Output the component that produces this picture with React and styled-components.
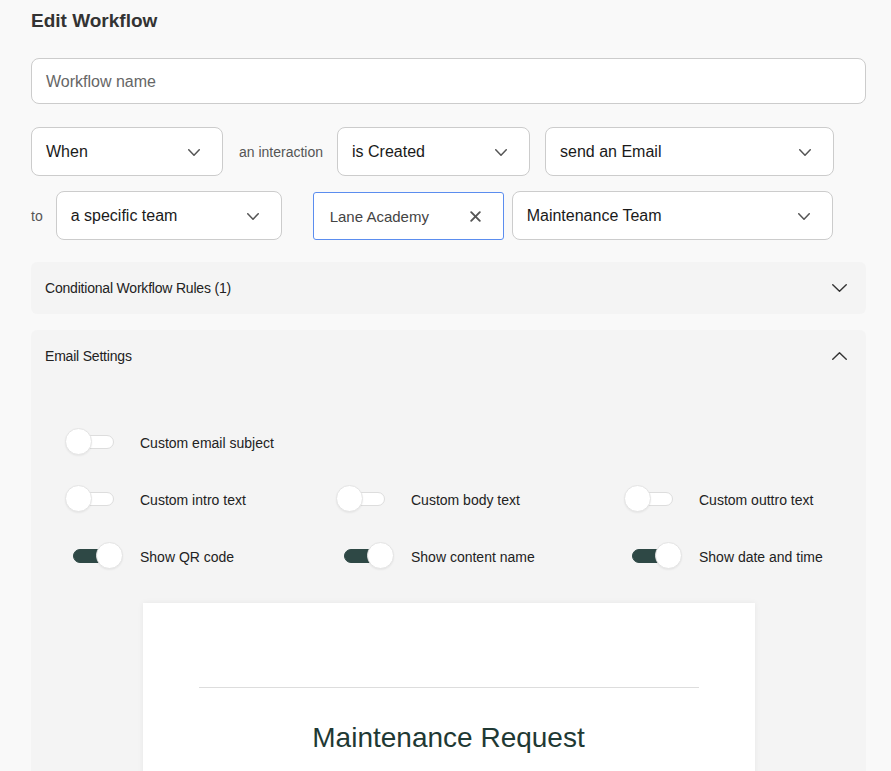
import React from 'react';
import styled, { createGlobalStyle } from 'styled-components';

const GlobalStyle = createGlobalStyle`
  body {
    margin: 0;
    background: #f9f9f9;
    font-family: "Liberation Sans", Arial, sans-serif;
    color: #222;
  }
`;

const Page = styled.div`
  padding: 9px 25px 0 31px;
  height: 771px;
  overflow: hidden;
  box-sizing: border-box;
`;

const Title = styled.h1`
  margin: 0;
  font-size: 19px;
  line-height: 24px;
  font-weight: 700;
  color: #333;
`;

const NameInput = styled.div`
  margin-top: 25px;
  height: 46px;
  box-sizing: border-box;
  border: 1px solid #ccc;
  border-radius: 8px;
  background: #fff;
  display: flex;
  align-items: center;
  padding: 1px 14px 0;
  font-size: 16px;
  color: #666;
`;

const Row = styled.div`
  display: flex;
  align-items: center;
  margin-top: ${p => p.top}px;
  height: 49px;
`;

const Connector = styled.span`
  font-size: 14px;
  color: #555;
  margin: 1px ${p => p.after}px 0 ${p => p.before}px;
  white-space: nowrap;
`;

const Select = styled.div`
  width: ${p => p.width}px;
  height: ${p => p.h || 49}px;
  box-sizing: border-box;
  border: 1px solid ${p => p.focused ? '#5b8def' : '#ccc'};
  border-radius: ${p => p.focused ? 3 : 8}px;
  background: #fff;
  display: flex;
  align-items: center;
  justify-content: space-between;
  padding: 1px 22px 0 ${p => p.focused ? 16 : 14}px;
  font-size: ${p => p.focused ? 15 : 16}px;
  color: ${p => p.focused ? '#444' : '#1a1a1a'};
  margin-left: ${p => p.gap || 0}px;
  flex-shrink: 0;
`;

const Chevron = ({ up, w = 12, h = 7, color = '#555', sw = 1.5 }) => (
  <svg width={w} height={h} viewBox={`0 0 ${w} ${h}`} fill="none">
    <path
      d={up ? `M0.75 ${h - 0.75} L${w / 2} 0.75 L${w - 0.75} ${h - 0.75}` : `M0.75 0.75 L${w / 2} ${h - 0.75} L${w - 0.75} 0.75`}
      stroke={color}
      strokeWidth={sw}
      strokeLinecap="round"
      strokeLinejoin="round"
    />
  </svg>
);

const Clear = () => (
  <svg width="11" height="11" viewBox="0 0 11 11">
    <path d="M1.2 1.2 L9.8 9.8 M9.8 1.2 L1.2 9.8" stroke="#555" strokeWidth="1.9" strokeLinecap="round" />
  </svg>
);

const Panel = styled.section`
  margin-top: ${p => p.top}px;
  background: #f4f4f4;
  border-radius: 6px;
`;

const PanelHeader = styled.div`
  height: 52px;
  display: flex;
  align-items: center;
  justify-content: space-between;
  padding: 0 19px 0 14px;
  font-size: 14px;
  color: #222;
  letter-spacing: -0.2px;
`;

const ToggleGrid = styled.div`
  display: grid;
  grid-template-columns: 271px 288px 1fr;
  row-gap: 30px;
  padding: 46px 0 0 34px;
`;

const Option = styled.label`
  display: flex;
  align-items: center;
  height: 27px;
  font-size: 14px;
  color: #222;
  grid-column: ${p => p.col};
`;

const OptionText = styled.span`
  margin-top: 2px;
`;

const Switch = styled.span`
  position: relative;
  width: 58px;
  height: 27px;
  flex-shrink: 0;
  margin-right: 17px;
`;

const Track = styled.span`
  position: absolute;
  left: 8px;
  right: 9px;
  top: 7px;
  height: 14px;
  box-sizing: border-box;
  border-radius: 7px;
  background: ${p => p.on ? '#2e4845' : '#fff'};
  border: 1px solid ${p => p.on ? '#2e4845' : '#ddd'};
`;

const Knob = styled.span`
  position: absolute;
  top: 0;
  left: ${p => p.on ? 31 : 0}px;
  width: 27px;
  height: 27px;
  box-sizing: border-box;
  border-radius: 50%;
  background: #fff;
  border: 1px solid #e4e4e4;
  box-shadow: 0 1px 2px rgba(0, 0, 0, 0.06);
`;

const Toggle = ({ on, col, children }) => (
  <Option col={col}>
    <Switch>
      <Track on={on} />
      <Knob on={on} />
    </Switch>
    <OptionText>{children}</OptionText>
  </Option>
);

const Preview = styled.div`
  width: 612px;
  margin: 34px auto 0;
  background: #fff;
  box-shadow: 0 0 6px rgba(0, 0, 0, 0.06);
  padding: 84px 56px 40px;
  box-sizing: border-box;
`;

const Rule = styled.hr`
  margin: 0;
  border: none;
  border-top: 1px solid #ddd;
`;

const PreviewTitle = styled.h2`
  margin: 33px 0 0;
  text-align: center;
  font-size: 28px;
  line-height: 34px;
  font-weight: 400;
  color: #1f3934;
`;

const options = [
  { label: 'Custom email subject', on: false, col: 1 },
  { label: 'Custom intro text', on: false, col: 1 },
  { label: 'Custom body text', on: false, col: 2 },
  { label: 'Custom outtro text', on: false, col: 3 },
  { label: 'Show QR code', on: true, col: 1 },
  { label: 'Show content name', on: true, col: 2 },
  { label: 'Show date and time', on: true, col: 3 },
];

export default function App() {
  return (
    <>
      <GlobalStyle />
      <Page>
        <Title>Edit Workflow</Title>
        <NameInput>Workflow name</NameInput>

        <Row top={23}>
          <Select width={192}>When<Chevron /></Select>
          <Connector before={16} after={14}>an interaction</Connector>
          <Select width={193}>is Created<Chevron /></Select>
          <Select width={289} gap={15}>send an Email<Chevron /></Select>
        </Row>

        <Row top={15}>
          <Connector before={0} after={13}>to</Connector>
          <Select width={226}>a specific team<Chevron /></Select>
          <Select width={191} h={48} gap={31} focused>Lane Academy<Clear /></Select>
          <Select width={321} gap={8}>Maintenance Team<Chevron /></Select>
        </Row>

        <Panel top={22}>
          <PanelHeader>
            Conditional Workflow Rules (1)
            <Chevron w={15} h={8} color="#333" sw={1.4} />
          </PanelHeader>
        </Panel>

        <Panel top={16}>
          <PanelHeader>
            Email Settings
            <Chevron up w={15} h={8} color="#333" sw={1.4} />
          </PanelHeader>
          <ToggleGrid>
            {options.map(o => (
              <Toggle key={o.label} on={o.on} col={o.col}>{o.label}</Toggle>
            ))}
          </ToggleGrid>
          <Preview>
            <Rule />
            <PreviewTitle>Maintenance Request</PreviewTitle>
          </Preview>
        </Panel>
      </Page>
    </>
  );
}
